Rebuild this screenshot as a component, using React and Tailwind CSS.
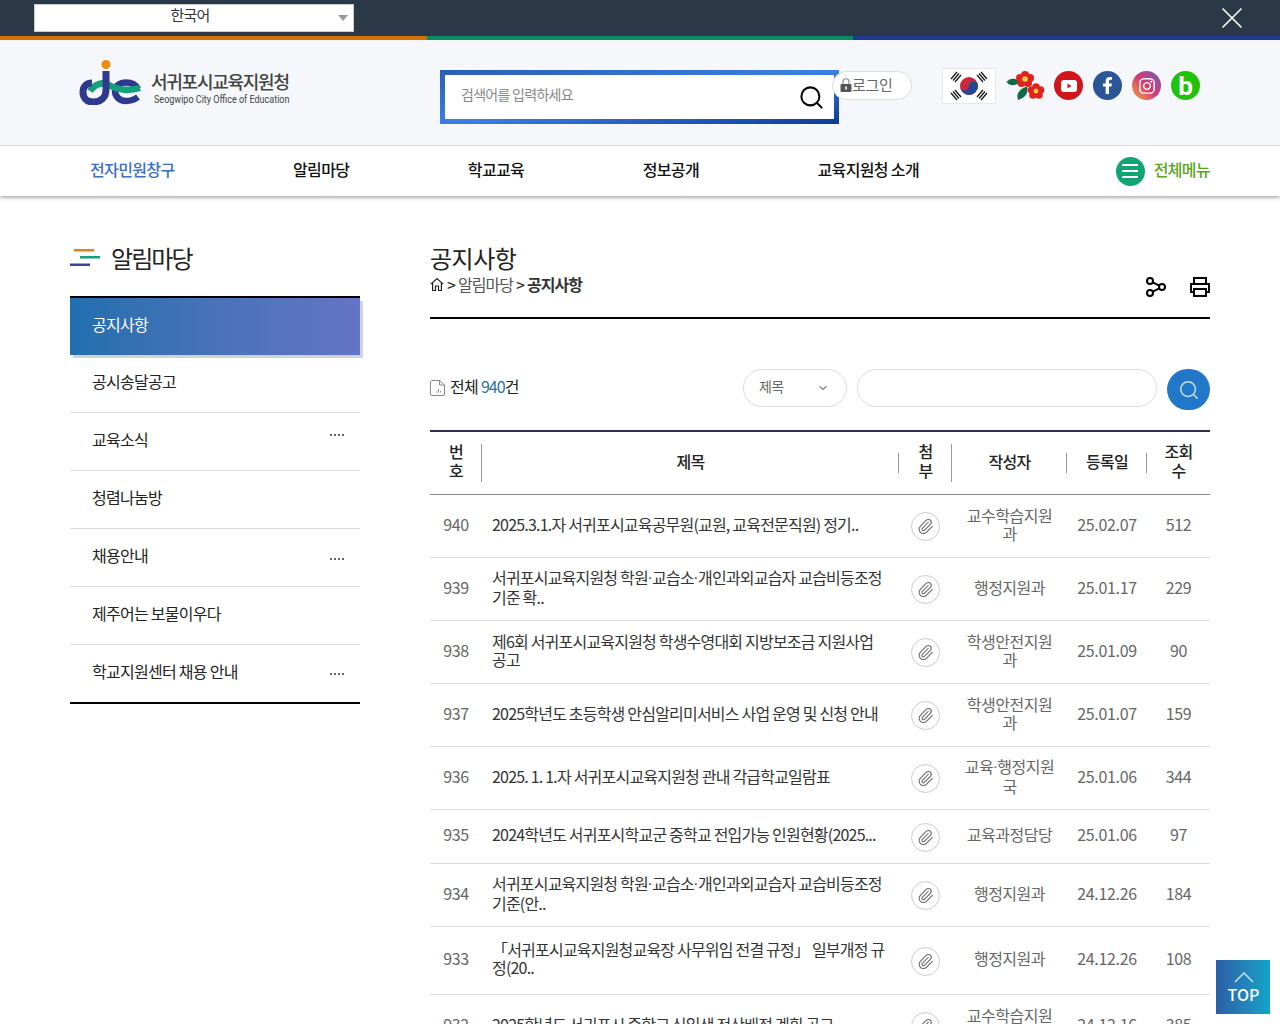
import React from 'react';
import { Search, X, ChevronDown, Paperclip } from 'lucide-react';
import { FaFacebookF, FaInstagram } from 'react-icons/fa';

const navItems = ['전자민원창구', '알림마당', '학교교육', '정보공개', '교육지원청 소개'];

const sideItems = [
  { label: '공시송달공고' },
  { label: '교육소식', dots: '-mt-[7px]' },
  { label: '청렴나눔방' },
  { label: '채용안내', dots: 'mt-[9px]' },
  { label: '제주어는 보물이우다' },
  { label: '학교지원센터 채용 안내', dots: 'mt-[7px]' },
];

const rows = [
  { no: 940, title: '2025.3.1.자 서귀포시교육공무원(교원, 교육전문직원) 정기..', dept: '교수학습지원과', date: '25.02.07', hit: 512, h: 'h-[63px]' },
  { no: 939, title: '서귀포시교육지원청 학원·교습소·개인과외교습자 교습비등조정기준 확..', dept: '행정지원과', date: '25.01.17', hit: 229, h: 'h-[63px]' },
  { no: 938, title: '제6회 서귀포시교육지원청 학생수영대회 지방보조금 지원사업 공고', dept: '학생안전지원과', date: '25.01.09', hit: 90, h: 'h-[63px]' },
  { no: 937, title: '2025학년도 초등학생 안심알리미서비스 사업 운영 및 신청 안내', dept: '학생안전지원과', date: '25.01.07', hit: 159, h: 'h-[63px]' },
  { no: 936, title: '2025. 1. 1.자 서귀포시교육지원청 관내 각급학교일람표', dept: '교육·행정지원국', date: '25.01.06', hit: 344, h: 'h-[63px]' },
  { no: 935, title: '2024학년도 서귀포시학교군 중학교 전입가능 인원현황(2025...', dept: '교육과정담당', date: '25.01.06', hit: 97, h: 'h-[54px]' },
  { no: 934, title: '서귀포시교육지원청 학원·교습소·개인과외교습자 교습비등조정기준(안..', dept: '행정지원과', date: '24.12.26', hit: 184, h: 'h-[63px]' },
  { no: 933, title: '「서귀포시교육지원청교육장 사무위임 전결 규정」 일부개정 규정(20..', dept: '행정지원과', date: '24.12.26', hit: 108, h: 'h-[68px]' },
  { no: 932, title: '2025학년도 서귀포시 중학교 신입생 전산배정 계획 공고', dept: '교수학습지원과', date: '24.12.16', hit: 385, h: 'h-[63px]' },
];

// the middle dot comes out full width in the CJK font, so it gets a latin one
const Dotted = ({ text }) => {
  const parts = text.split('·');
  return parts.map((part, index) => (
    <React.Fragment key={index}>
      {index > 0 && <span className="font-['Roboto',sans-serif] tracking-normal">·</span>}
      {part}
    </React.Fragment>
  ));
};

const Logo = () => (
  <svg width="64" height="47" viewBox="0 0 64 47" fill="none">
    <circle cx="28" cy="6.5" r="4.5" fill="#ee8a12" />
    <path d="M60 39 C56 42 52 43 48 43 C41 43 37 38 37 33 C37 28 42 24.5 48 24.5 C54 24.5 58 27 60 31" stroke="#2f3a8f" strokeWidth="6.5" />
    <path d="M12 33 C16 27 24 23 31 27 C38 31 48 34 62 30" stroke="#13a07c" strokeWidth="6.5" />
    <path d="M28 13 V32 C28 40 22 44 15 44 C8 44 5 39 5 34 C5 28 9 25 14 25" stroke="#2f3a8f" strokeWidth="7" />
  </svg>
);

const Flag = () => (
  <div className="w-[54px] h-[36px] bg-white border border-[#e8e8e8] flex items-center justify-center">
    <svg width="50" height="32" viewBox="0 0 50 32">
      <circle cx="25" cy="16" r="9" fill="#c8283c" />
      <path d="M16 16 a9 9 0 0 0 18 0 a4.5 4.5 0 0 0 -9 0 a4.5 4.5 0 0 1 -9 0z" fill="#23489a" />
      <g stroke="#111" strokeWidth="1.2">
        <path d="M7 9 L13 2 M9 10.5 L15 3.5 M11 12 L17 5" />
        <path d="M33 5 L39 12 M35 3.5 L41 10.5 M37 2 L43 9" />
        <path d="M7 23 L13 30 M9 21.5 L15 28.5 M11 20 L17 27" />
        <path d="M33 27 L39 20 M35 28.5 L41 21.5 M37 30 L43 23" />
      </g>
    </svg>
  </div>
);

const Camellia = () => (
  <svg width="39" height="30" viewBox="0 0 39 30">
    <path d="M0.5 11 C4 6.5 10 6.5 14 11 C10 15 4 15.5 0.5 11z" fill="#0f6b45" />
    <path d="M12 29 C10 23 13 18 21 15.5 C23 22 19 27 12 29z" fill="#0f6b45" />
    <g fill="#e3211f">
      <circle cx="19" cy="4" r="4" />
      <circle cx="24" cy="7" r="4" />
      <circle cx="22" cy="12" r="4" />
      <circle cx="15.5" cy="12" r="4" />
      <circle cx="14" cy="7" r="4" />
      <circle cx="19" cy="8" r="4" />
      <circle cx="30" cy="16" r="3.8" />
      <circle cx="34.5" cy="19" r="3.8" />
      <circle cx="33" cy="24" r="3.8" />
      <circle cx="27" cy="24" r="3.8" />
      <circle cx="25.5" cy="19" r="3.8" />
      <circle cx="30" cy="20" r="3.8" />
    </g>
    <circle cx="19" cy="8" r="2.8" fill="#f2d23c" />
    <circle cx="30" cy="20" r="2.4" fill="#f2d23c" />
  </svg>
);

const LockIcon = () => (
  <svg width="12" height="14" viewBox="0 0 11 14" className="shrink-0">
    <path d="M2.5 6.5 V3.8 A3 3 0 0 1 8.5 3.8 V6.5" fill="none" stroke="#888" strokeWidth="1.1" />
    <rect x="0" y="6" width="11" height="8" rx="1" fill="#555" />
    <rect x="4.7" y="8.5" width="1.6" height="3" fill="#fff" />
  </svg>
);

const ShareIcon = () => (
  <svg width="22" height="22" viewBox="0 0 22 22" fill="none" stroke="#000" strokeWidth="2">
    <circle cx="5" cy="5" r="3" />
    <circle cx="5" cy="17" r="3" />
    <circle cx="17" cy="11" r="3" />
    <path d="M7.7 6.4 L14.3 9.6 M7.7 15.6 L14.3 12.4" />
  </svg>
);

const PrintIcon = () => (
  <svg width="20" height="20" viewBox="0 0 20 20" fill="none" stroke="#000" strokeWidth="2">
    <path d="M4 7 V1 H16 V7" />
    <path d="M4 15 H1 V7 H19 V15 H16" />
    <rect x="4" y="12" width="12" height="7" />
  </svg>
);

const HomeIcon = () => (
  <svg width="14" height="15" viewBox="0 0 14 14" fill="none" stroke="#222" strokeWidth="1.2">
    <path d="M.8 6.6 L7 1 L13.2 6.6" />
    <path d="M2.6 5.6 V13 H5.5 V8.5 H8.5 V13 H11.4 V5.6" />
  </svg>
);

const FileIcon = () => (
  <svg width="15" height="16" viewBox="0 0 15 16" fill="none" stroke="#888" strokeWidth="1">
    <path d="M1.5 .5 H9.5 L14.5 5 V14 A1.5 1.5 0 0 1 13 15.5 H2 A1.5 1.5 0 0 1 .5 14 V1.5 Z" />
    <path d="M9.5 .5 V5 H14.5" />
    <path d="M6.5 12.5 V11.5 M8.5 12.5 V9 M10.5 12.5 V11" />
  </svg>
);

const Dots = ({ className }) => (
  <span className={`flex gap-[2px] ${className}`}>
    <i className="w-[2px] h-[2px] bg-[#666]"></i>
    <i className="w-[2px] h-[2px] bg-[#666]"></i>
    <i className="w-[2px] h-[2px] bg-[#666]"></i>
    <i className="w-[2px] h-[2px] bg-[#666]"></i>
  </span>
);

const Th = ({ children, className = '', line }) => (
  <th className={`relative font-medium text-[16px] leading-[19px] text-[#222] pb-[3px] ${className}`}>
    {children}
    {line && <span className={`absolute right-0 top-1/2 -translate-y-1/2 w-px bg-[#999] ${line}`}></span>}
  </th>
);

const App = () => {
  return (
    <div className="relative h-[1024px] overflow-hidden bg-white font-['Noto_Sans_CJK_KR','Noto_Sans',sans-serif] tracking-[-0.045em] text-[#222]">
      {/* Top bar */}
      <div className="h-[36px] bg-[#2b3847] flex items-center justify-between pl-[34px] pr-[30px]">
        <div className="relative w-[320px] h-[28px] bg-white border border-[#ccc] pr-[8px] text-center text-[15px] leading-[20px] text-[#333]">
          한국어
          <span className="absolute right-[5px] top-[10px] w-0 h-0 border-x-[5px] border-t-[6px] border-x-transparent border-t-[#999]"></span>
        </div>
        <X size={36} color="#fff" strokeWidth={1.1} />
      </div>
      <div className="flex h-[4px]">
        <div className="flex-1 bg-[#d2700a]"></div>
        <div className="flex-1 bg-[#0a8c60]"></div>
        <div className="flex-1 bg-[#1d3a8f]"></div>
      </div>

      {/* Header */}
      <header className="h-[106px] bg-[#f5f7fa] border-b border-[#ddd] flex items-start pl-[78px]">
        <div className="flex items-start w-[362px] pt-[18px]">
          <Logo />
          <div className="ml-[9px] pt-[12px]">
            <div className="text-[18px] leading-[22px] font-medium text-[#444] tracking-[-0.07em] whitespace-nowrap">서귀포시교육지원청</div>
            <div className="ml-[3px] mt-[1px] text-[11px] leading-[13px] text-[#444] font-['Roboto',sans-serif] tracking-normal whitespace-nowrap origin-left scale-x-[0.82]">Seogwipo City Office of Education</div>
          </div>
        </div>
        <div className="mt-[30px] w-[399px] h-[54px] p-[5px] bg-gradient-to-br from-[#2a5db5] via-[#3a80e4] to-[#0b3c94]">
          <div className="h-full bg-white flex items-center justify-between pl-[16px] pr-[9px]">
            <span className="text-[14px] text-[#888] pb-[5px]">검색어를 입력하세요</span>
            <Search size={27} color="#000" strokeWidth={1.8} />
          </div>
        </div>
        <div className="relative -ml-[7px] mt-[31px] w-[80px] h-[29px] bg-white border border-[#ddd] rounded-full flex items-center pl-[7px] pb-[1px] text-[15px] text-[#666] tracking-[-0.02em]">
          <LockIcon />
          로그인
        </div>
        <div className="ml-[30px] mt-[28px]"><Flag /></div>
        <div className="ml-[10px] mt-[31px]"><Camellia /></div>
        <div className="mt-[31px] ml-[9px] flex gap-[10px]">
          <div className="w-[29px] h-[29px] rounded-full bg-[#d0151c] flex items-center justify-center">
            <svg width="16" height="12" viewBox="0 0 16 12">
              <rect width="16" height="12" rx="3" fill="#fff" />
              <path d="M6.5 3.5 L10.5 6 L6.5 8.5z" fill="#d0151c" />
            </svg>
          </div>
          <div className="w-[29px] h-[29px] rounded-full bg-[#2b5597] flex items-center justify-center">
            <FaFacebookF size={17} color="#fff" />
          </div>
          <div className="w-[29px] h-[29px] rounded-full bg-gradient-to-tr from-[#f2a02f] via-[#d6376f] to-[#6a4bb8] flex items-center justify-center">
            <FaInstagram size={18} color="#fff" />
          </div>
          <div className="w-[29px] h-[29px] rounded-full bg-[#20c20a] flex items-center justify-center text-white font-bold text-[26px] leading-none tracking-normal font-['Roboto',sans-serif]">
            b
          </div>
        </div>
      </header>

      {/* Nav */}
      <nav className="h-[50px] bg-white shadow-[0_2px_3px_rgba(0,0,0,0.3)] flex items-center pl-[90px] pr-[70px] text-[16px] font-medium relative tracking-[-0.04em]">
        <div className="flex gap-[118.5px] pb-[5px]">
          {navItems.map((item, index) => (
            <a key={index} className={index === 0 ? 'text-[#3a6fc4]' : 'text-[#111]'}>{item}</a>
          ))}
        </div>
        <div className="ml-auto flex items-center gap-[9px] text-[#5aa51c]">
          <div className="w-[29px] h-[29px] rounded-full bg-[#10a674] flex flex-col items-center justify-center gap-[4px]">
            <span className="w-[16px] h-[2px] bg-white"></span>
            <span className="w-[16px] h-[2px] bg-white"></span>
            <span className="w-[16px] h-[2px] bg-white"></span>
          </div>
          <span className="pb-[5px]">전체메뉴</span>
        </div>
      </nav>

      <div className="flex gap-[70px] px-[70px] pt-[45px]">
        {/* Sidebar */}
        <aside className="w-[290px] shrink-0">
          <div className="flex items-center gap-[11px] h-[34px]">
            <svg width="30" height="18" viewBox="0 0 30 18">
              <rect x="4" y="0" width="20" height="2.5" fill="#d9851a" />
              <rect x="10" y="7" width="20" height="2.5" fill="#13a07c" />
              <rect x="0" y="14.5" width="20" height="2.5" fill="#3a4496" />
            </svg>
            <h2 className="text-[24px] leading-none text-[#222] tracking-[-0.08em]">알림마당</h2>
          </div>
          <div className="mt-[21px] border-t-2 border-black border-b-2 border-b-black">
            <div className="h-[57px] pl-[22px] pb-[6px] flex items-center text-[16px] text-white bg-gradient-to-r from-[#1f6fae] to-[#6574c6] shadow-[3px_3px_0_#ccd3da]">
              공지사항
            </div>
            {sideItems.map((item, index) => (
              <div
                key={index}
                className={`pl-[22px] pr-[16px] pb-[6px] flex items-center justify-between text-[16px] text-[#222] ${index < sideItems.length - 1 ? 'h-[58px] border-b border-[#ddd]' : 'h-[57px]'}`}
              >
                {item.label}
                {item.dots && <Dots className={item.dots} />}
              </div>
            ))}
          </div>
        </aside>

        {/* Main */}
        <main className="w-[780px]">
          <h1 className="text-[24px] leading-[34px] mb-[1px] font-normal text-[#222] tracking-[-0.02em]">공지사항</h1>
          <div className="h-[43px] flex items-start justify-between border-b-2 border-black">
            <div className="flex items-center gap-[3px] -mt-[1px] text-[16px] leading-[18px] text-[#555] tracking-[-0.06em]">
              <HomeIcon />
              <span className="text-[#222]">&gt;</span>
              <span>알림마당</span>
              <span className="text-[#222]">&gt;</span>
              <strong className="font-bold text-[#333]">공지사항</strong>
            </div>
            <div className="flex items-center gap-[23px]">
              <ShareIcon />
              <PrintIcon />
            </div>
          </div>

          {/* Search row */}
          <div className="mt-[50px] flex items-start">
            <div className="flex items-center gap-[5px] text-[16px] h-[38px] text-[#222]">
              <FileIcon />
              <span className="pb-[4px]">전체 <span className="text-[#2f6fa8] tracking-[-0.06em]">940</span>건</span>
            </div>
            <div className="ml-auto w-[104px] h-[38px] border border-[#ddd] rounded-full flex items-center justify-between pl-[15px] pr-[17px] text-[14px] text-[#666]">
              <span className="pb-[4px]">제목</span>
              <ChevronDown size={12} color="#222" />
            </div>
            <div className="ml-[10px] w-[300px] h-[38px] border border-[#ddd] rounded-full bg-white"></div>
            <div className="ml-[10px] w-[43px] h-[41px] rounded-full bg-[#2278c8] flex items-center justify-center">
              <Search size={22} color="#cfe5f8" strokeWidth={1.6} />
            </div>
          </div>

          {/* Table */}
          <table className="mt-[20px] w-[780px] table-fixed border-t-2 border-[#2e2e4e]">
            <thead>
              <tr className="h-[63px] border-b border-[#888]">
                <Th className="w-[52px] px-[16px]" line="h-[38px]">번호</Th>
                <Th className="w-[417px]" line="h-[20px]">제목</Th>
                <Th className="w-[53px] px-[18px]" line="h-[38px]">첨부</Th>
                <Th className="w-[115px]" line="h-[20px]">작성자</Th>
                <Th className="w-[80px]" line="h-[20px]">등록일</Th>
                <Th className="w-[63px] px-[14px]">조회수</Th>
              </tr>
            </thead>
            <tbody className="text-[16px] leading-[18px] text-[#444]">
              {rows.map((row) => (
                <tr key={row.no} className={`${row.h} border-b border-[#ddd]`}>
                  <td className="text-center text-[#666] tracking-[-0.02em] pb-[4px]">{row.no}</td>
                  <td className="pl-[10px] pr-[10px] pb-[4px] text-[#333] tracking-[-0.05em]"><Dotted text={row.title} /></td>
                  <td>
                    <div className="mx-auto w-[29px] h-[29px] mt-[2px] rounded-full border border-[#ccc] flex items-center justify-center">
                      <Paperclip size={17} color="#666" strokeWidth={1.5} />
                    </div>
                  </td>
                  <td className="text-center px-[10px] pb-[4px] text-[#666] tracking-[-0.03em]"><Dotted text={row.dept} /></td>
                  <td className="text-center pb-[4px] text-[#666] tracking-[-0.02em]">{row.date}</td>
                  <td className="text-center pb-[4px] text-[#666] tracking-[-0.02em]">{row.hit}</td>
                </tr>
              ))}
            </tbody>
          </table>
        </main>
      </div>

      {/* Top button */}
      <a className="absolute left-[1216px] top-[960px] w-[54px] h-[54px] pl-[1px] bg-gradient-to-r from-[#2b5fa6] to-[#0ea3c9] flex flex-col items-center justify-center text-white text-[16px] font-medium tracking-normal leading-none">
        <svg width="20" height="11" viewBox="0 0 20 11" fill="none" stroke="#bfe3f5" strokeWidth="1.5" className="mb-[3px]">
          <path d="M1 10 L10 1 L19 10" />
        </svg>
        TOP
      </a>
    </div>
  );
};

export default App;
